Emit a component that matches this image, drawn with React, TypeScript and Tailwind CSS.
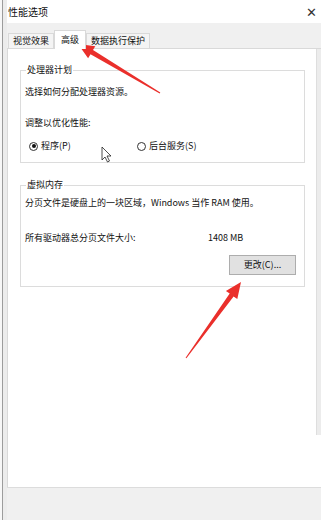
import React from "react";

type Pt = [number, number];

// build a tapered red arrow polygon from tail to tip
const arrowPoints = (tail: Pt, tip: Pt, head = 16, headHalf = 7, shaft = 2.4, tailW = 0.5) => {
    const dx = tip[0] - tail[0];
    const dy = tip[1] - tail[1];
    const len = Math.hypot(dx, dy);
    const ux = dx / len;
    const uy = dy / len;
    const nx = -uy;
    const ny = ux;
    const bx = tip[0] - ux * head;
    const by = tip[1] - uy * head;
    const pts: Pt[] = [
        [tail[0] + nx * tailW, tail[1] + ny * tailW],
        [bx + nx * shaft, by + ny * shaft],
        [bx + nx * headHalf, by + ny * headHalf],
        tip,
        [bx - nx * headHalf, by - ny * headHalf],
        [bx - nx * shaft, by - ny * shaft],
        [tail[0] - nx * tailW, tail[1] - ny * tailW],
    ];
    return pts.map((p) => `${p[0].toFixed(1)},${p[1].toFixed(1)}`).join(" ");
};

const Radio = ({ checked, label, className }: { checked?: boolean; label: string; className?: string }) => (
    <div className={`flex items-center gap-[3px] ${className ?? ""}`}>
        <span className="w-[9px] h-[9px] rounded-full border border-[#333] bg-white flex items-center justify-center">
            {checked && <span className="w-[4px] h-[4px] rounded-full bg-[#111]" />}
        </span>
        <span>{label}</span>
    </div>
);

const Tab = ({ label, active }: { label: string; active?: boolean }) => (
    <div
        className={
            active
                ? "h-[19px] px-[6px] bg-white border border-b-0 border-[#d9d9d9] flex items-center -mb-px relative z-10"
                : "h-[15px] px-[4px] bg-[#f4f4f4] border border-b-0 border-[#d9d9d9] flex items-center"
        }
    >
        {label}
    </div>
);

export default function App() {
    return (
        <div
            className="relative w-[321px] h-[520px] overflow-hidden bg-[#f0f0f0] flex text-[9px] leading-[12px] text-[#111]"
            style={{ fontFamily: '"Noto Sans CJK SC", "Noto Sans", sans-serif' }}
        >
            {/* left edge of the window behind */}
            <div className="w-[7px] flex shrink-0">
                <div className="w-[2px] bg-[#f7f7f7]" />
                <div className="w-px bg-[#9c9c9c]" />
                <div className="flex-1 bg-[#ececec]" />
            </div>

            <div className="flex-1 flex flex-col">
                {/* title bar */}
                <div className="h-[23px] bg-white flex items-center justify-between pl-[1px] pr-[4px]">
                    <span className="text-[10px]">性能选项</span>
                    <span className="text-[13px] text-[#333] leading-none">✕</span>
                </div>

                {/* tab strip */}
                <div className="h-[25px] flex items-end pl-[1px]">
                    <Tab label="视觉效果" />
                    <Tab label="高级" active />
                    <Tab label="数据执行保护" />
                </div>

                {/* tab page */}
                <div className="h-[439px] bg-white border-t border-l border-[#d9d9d9] flex">
                    <div className="flex-1 flex flex-col pl-[12px]">
                        <fieldset className="mt-[15px] m-0 p-0 w-[285px] min-w-0 border border-[#dcdcdc] pl-[4px] pb-[10px]">
                            <legend className="ml-[1px] px-[1px]">处理器计划</legend>
                            <div className="mt-[10px]">选择如何分配处理器资源。</div>
                            <div className="mt-[19px]">调整以优化性能:</div>
                            <div className="mt-[11px] flex pl-[4px]">
                                <Radio checked label="程序(P)" className="w-[108px]" />
                                <Radio label="后台服务(S)" />
                            </div>
                        </fieldset>

                        <fieldset className="mt-[16px] m-0 p-0 w-[285px] min-w-0 border border-[#dcdcdc] pl-[4px] pb-[11px]">
                            <legend className="ml-[1px] px-[1px]">虚拟内存</legend>
                            <div className="mt-[6px]">分页文件是硬盘上的一块区域，Windows 当作 RAM 使用。</div>
                            <div className="mt-[23px] flex">
                                <span className="w-[183px]">所有驱动器总分页文件大小:</span>
                                <span>1408 MB</span>
                            </div>
                            <div className="mt-[11px] flex justify-end pr-[8px]">
                                <button className="w-[67px] h-[20px] bg-[#e1e1e1] border border-[#adadad] text-[9px] flex items-center justify-center">
                                    更改(C)...
                                </button>
                            </div>
                        </fieldset>
                    </div>
                    <div className="w-[5px] h-[386px] bg-[#ececec] border-l border-[#dedede]" />
                </div>

                {/* bottom area */}
                <div className="flex-1 border-t border-[#dcdcdc] bg-[#f0f0f0]" />
            </div>

            {/* annotations over the screenshot */}
            <svg className="absolute inset-0 pointer-events-none" width={321} height={520} viewBox="0 0 321 520">
                <polygon points={arrowPoints([160, 93], [78, 44])} fill="#ea2f2b" />
                <polygon points={arrowPoints([186, 358], [241, 282])} fill="#ea2f2b" />
                <path
                    d="M102 147 L102 160 L105 157 L107.5 162 L109.5 161 L107 156 L111 156 Z"
                    fill="#fff"
                    stroke="#222"
                    strokeWidth={0.8}
                    strokeLinejoin="round"
                />
            </svg>
        </div>
    );
}
